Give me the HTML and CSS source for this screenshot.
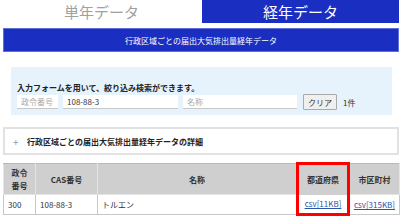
FILE: index.html
```html
<!DOCTYPE html>
<html lang="ja">
<head>
<meta charset="utf-8">
<link rel="stylesheet" href="styles.css">
</head>
<body>
<div class="page">
  <div class="tabs">
    <div class="tab">単年データ</div>
    <div class="tab active">経年データ</div>
  </div>
  <div class="banner">行政区域ごとの届出大気排出量経年データ</div>
  <div class="search">
    <p class="intro">入力フォームを用いて、絞り込み検索ができます。</p>
    <div class="form-row">
      <input class="field f1" type="text" placeholder="政令番号">
      <input class="field f2" type="text" value="108-88-3">
      <input class="field f3" type="text" placeholder="名称">
      <button class="clear" type="button">クリア</button>
      <span class="count">1件</span>
    </div>
  </div>
  <div class="details"><span class="plus">+</span><span class="details-title">行政区域ごとの届出大気排出量経年データの詳細</span></div>
  <table class="data">
    <colgroup>
      <col class="c1"><col class="c2"><col class="c3"><col class="c4"><col class="c5">
    </colgroup>
    <thead>
      <tr>
        <th>政令<br>番号</th>
        <th>CAS番号</th>
        <th>名称</th>
        <th class="hl">都道府県</th>
        <th>市区町村</th>
      </tr>
    </thead>
    <tbody>
      <tr>
        <td>300</td>
        <td>108-88-3</td>
        <td>トルエン</td>
        <td class="hl"><a href="#">csv[11KB]</a></td>
        <td><a href="#">csv[315KB]</a></td>
      </tr>
    </tbody>
  </table>
</div>
</body>
</html>
```

FILE: styles.css
```css
* { box-sizing: border-box; }
html, body { margin: 0; padding: 0; background: #fff; }
body {
  font-family: "Noto Sans CJK JP", "Noto Sans", sans-serif;
  color: #333;
  width: 408px;
  height: 220px;
  overflow: hidden;
}
.page {
  padding: 0 9px 0 3px;
}
.tabs {
  display: flex;
  gap: 2px;
  height: 23px;
}
.tab {
  flex: 1;
  display: flex;
  align-items: center;
  justify-content: center;
  font-size: 15px;
  color: #a0a0a0;
  line-height: 1;
}
.tab.active {
  background: #1a2ec2;
  color: #fff;
}
.banner {
  margin-top: 5px;
  height: 24px;
  background: #1a2ec2;
  border: 1px solid #6070d8;
  color: #fff;
  font-size: 8px;
  display: flex;
  align-items: center;
  justify-content: center;
}
.search {
  margin: 15px 7px 0 8px;
  height: 48px;
  background: #e6f2fc;
  padding: 16px 6px 0 6px;
}
.intro {
  margin: 0;
  font-size: 8px;
  font-weight: bold;
  line-height: 10px;
  color: #222;
}
.form-row {
  display: flex;
  align-items: center;
  margin-top: 1px;
  height: 16px;
}
.field {
  height: 14px;
  border: none;
  border-bottom: 1px solid #c8c8c8;
  background: #fff;
  font-family: inherit;
  font-size: 8px;
  padding: 0 4px;
  color: #333;
  margin: 0;
  outline: none;
}
.field::placeholder { color: #aaa; }
.f1 { width: 41px; }
.f2 { width: 115px; margin-left: 5px; }
.f3 { width: 114px; margin-left: 5px; }
.clear {
  margin-left: 6px;
  width: 34px;
  height: 16px;
  padding: 0;
  font-family: inherit;
  font-size: 8px;
  color: #333;
  background: #efefef;
  border: 1px solid #aaa;
  border-radius: 1px;
}
.count {
  margin-left: 6px;
  font-size: 8px;
  color: #333;
}
.details {
  margin-top: 12px;
  height: 28px;
  border: 2px solid #e2e2e2;
  display: flex;
  align-items: center;
  padding-left: 8px;
}
.plus {
  color: #999;
  font-size: 10px;
  width: 14px;
}
.details-title {
  font-size: 8px;
  font-weight: bold;
  color: #222;
}
.data {
  margin-top: 7px;
  width: 396px;
  border-collapse: collapse;
  table-layout: fixed;
  font-size: 8px;
}
.c1 { width: 32px; }
.c2 { width: 62px; }
.c3 { width: 200px; }
.c4 { width: 51px; }
.c5 { width: 51px; }
.data th {
  background: #cfcfcf;
  border: 1px solid #e4e4e4;
  border-top-color: #b8b8b8;
  height: 31px;
  font-weight: bold;
  color: #333;
  line-height: 13px;
  padding: 0;
  text-align: center;
}
.data td {
  border: 1px solid #c8c8c8;
  height: 20px;
  padding: 0 4px;
  color: #333;
  white-space: nowrap;
}
.data td a { color: #2a55a8; }
.data td.hl, .data td:last-child { padding: 0 2px; text-align: center; }
.data th.hl { border: 3px solid #f00; border-bottom: none; }
.data td.hl { border: 3px solid #f00; border-top: none; }
```
